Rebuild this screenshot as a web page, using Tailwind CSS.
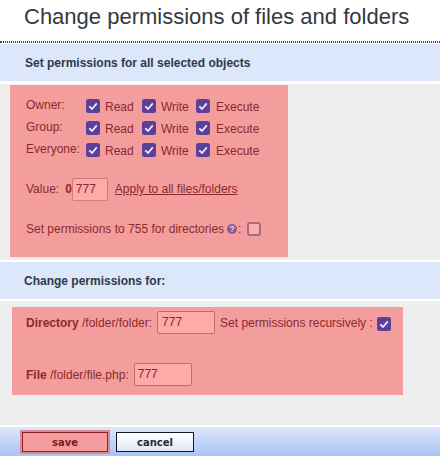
<!DOCTYPE html>
<html><head><meta charset="utf-8">
<script src="https://cdn.jsdelivr.net/npm/@tailwindcss/browser@4"></script>
</head>
<body class="bg-white">
<div class="w-[440px] h-[456px] overflow-hidden flex flex-col font-['Liberation_Sans',Arial,sans-serif] text-[12px] text-[#8a2a2e]">
  <h1 class="h-[41px] pl-6 pt-[3px] text-[22px] leading-[28px] text-[#33393f] font-normal whitespace-nowrap">Change permissions of files and folders</h1>
  <div class="border-y border-dotted border-[#444] h-[2px]"></div>
  <div class="h-[37px] mt-px bg-[#dce7fb] pl-[25px] flex items-center font-bold text-[#2f3a46]">Set permissions for all selected objects</div>
  <div class="h-[3px]"></div>
  <div class="h-[176px] bg-[#eeeeee] pl-[10px] pt-px">
    <div class="w-[278px] h-[172px] bg-[#f49d9d] pl-[16px] pt-[12px] flex flex-col">
      <div class="grid grid-cols-[60px_56px_54px_auto] auto-rows-[18px] gap-y-[4px] leading-[18px]">
        <span class="-mt-px">Owner:</span>
        <label class="flex items-center gap-[5px]"><svg class="w-[14px] h-[14px]" viewBox="0 0 14 14"><rect width="14" height="14" rx="2.5" fill="#5b3f9b"/><path d="M3.3 7.3 6 10l4.8-5.6" fill="none" stroke="#efeaf7" stroke-width="1.8"/></svg><span class="mt-[2px]">Read</span></label>
        <label class="flex items-center gap-[5px]"><svg class="w-[14px] h-[14px]" viewBox="0 0 14 14"><rect width="14" height="14" rx="2.5" fill="#5b3f9b"/><path d="M3.3 7.3 6 10l4.8-5.6" fill="none" stroke="#efeaf7" stroke-width="1.8"/></svg><span class="mt-[2px]">Write</span></label>
        <label class="flex items-center gap-[6px]"><svg class="w-[14px] h-[14px]" viewBox="0 0 14 14"><rect width="14" height="14" rx="2.5" fill="#5b3f9b"/><path d="M3.3 7.3 6 10l4.8-5.6" fill="none" stroke="#efeaf7" stroke-width="1.8"/></svg><span class="mt-[2px]">Execute</span></label>
        <span class="-mt-px">Group:</span>
        <label class="flex items-center gap-[5px]"><svg class="w-[14px] h-[14px]" viewBox="0 0 14 14"><rect width="14" height="14" rx="2.5" fill="#5b3f9b"/><path d="M3.3 7.3 6 10l4.8-5.6" fill="none" stroke="#efeaf7" stroke-width="1.8"/></svg><span class="mt-[2px]">Read</span></label>
        <label class="flex items-center gap-[5px]"><svg class="w-[14px] h-[14px]" viewBox="0 0 14 14"><rect width="14" height="14" rx="2.5" fill="#5b3f9b"/><path d="M3.3 7.3 6 10l4.8-5.6" fill="none" stroke="#efeaf7" stroke-width="1.8"/></svg><span class="mt-[2px]">Write</span></label>
        <label class="flex items-center gap-[6px]"><svg class="w-[14px] h-[14px]" viewBox="0 0 14 14"><rect width="14" height="14" rx="2.5" fill="#5b3f9b"/><path d="M3.3 7.3 6 10l4.8-5.6" fill="none" stroke="#efeaf7" stroke-width="1.8"/></svg><span class="mt-[2px]">Execute</span></label>
        <span class="-mt-px">Everyone:</span>
        <label class="flex items-center gap-[5px]"><svg class="w-[14px] h-[14px]" viewBox="0 0 14 14"><rect width="14" height="14" rx="2.5" fill="#5b3f9b"/><path d="M3.3 7.3 6 10l4.8-5.6" fill="none" stroke="#efeaf7" stroke-width="1.8"/></svg><span class="mt-[2px]">Read</span></label>
        <label class="flex items-center gap-[5px]"><svg class="w-[14px] h-[14px]" viewBox="0 0 14 14"><rect width="14" height="14" rx="2.5" fill="#5b3f9b"/><path d="M3.3 7.3 6 10l4.8-5.6" fill="none" stroke="#efeaf7" stroke-width="1.8"/></svg><span class="mt-[2px]">Write</span></label>
        <label class="flex items-center gap-[6px]"><svg class="w-[14px] h-[14px]" viewBox="0 0 14 14"><rect width="14" height="14" rx="2.5" fill="#5b3f9b"/><path d="M3.3 7.3 6 10l4.8-5.6" fill="none" stroke="#efeaf7" stroke-width="1.8"/></svg><span class="mt-[2px]">Execute</span></label>
      </div>
      <div class="flex items-center mt-[19px] h-[22px]">
        <span>Value:<span class="ml-[6px] font-bold">0</span></span>
        <div class="w-[36px] h-[23px] border border-[#c97f80] rounded-[2px] bg-[#ffa9a9] pl-[3px] leading-[21px] text-[#8a2a2e]">777</div>
        <a class="ml-[7px] underline">Apply to all files/folders</a>
      </div>
      <div class="flex items-center mt-[21px] h-[16px]">
        <span>Set permissions to 755 for directories</span>
        <svg class="w-[10px] h-[10px] ml-[3px]" viewBox="0 0 10 10"><circle cx="5" cy="5" r="5" fill="#8a5a9c"/><path d="M3.5 4c0-2 3.2-2 3.2-.2 0 1.1-1.7 1.1-1.7 2.2M5 7v1" fill="none" stroke="#f3d5dc" stroke-width="1.2"/></svg>
        <span class="ml-px">:</span>
        <span class="ml-[6px] w-[14px] h-[14px] border-2 border-[#a86a80] rounded-[3px] bg-[#f8b0b0]"></span>
      </div>
    </div>
  </div>
  <div class="h-[2px]"></div>
  <div class="h-[37px] bg-[#dce7fb] pl-[24px] flex items-center font-bold text-[#2f3a46]">Change permissions for:</div>
  <div class="h-[2px]"></div>
  <div class="h-[124px] bg-[#eeeeee] pl-[12px] pt-[6px]">
    <div class="w-[391px] h-[88px] bg-[#f49d9d] pl-[14px] pt-[4px] flex flex-col">
      <div class="flex items-center h-[23px]">
        <span><b>Directory</b> /folder/folder:</span>
        <div class="ml-[5px] w-[58px] h-[23px] border border-[#b87072] rounded-[2px] bg-[#ffa9a9] pl-[4px] leading-[21px]">777</div>
        <span class="ml-[5px]">Set permissions recursively :</span>
        <svg class="w-[14px] h-[14px] ml-[4px] mt-[2px]" viewBox="0 0 14 14"><rect width="14" height="14" rx="2.5" fill="#5b3f9b"/><path d="M3.3 7.3 6 10l4.8-5.6" fill="none" stroke="#efeaf7" stroke-width="1.8"/></svg>
      </div>
      <div class="flex items-center h-[23px] mt-[29px]">
        <span><b>File</b> /folder/file.php:</span>
        <div class="ml-[5px] w-[58px] h-[23px] border border-[#b87072] rounded-[2px] bg-[#ffa9a9] pl-[3px] leading-[21px]">777</div>
      </div>
    </div>
  </div>
  <div class="h-[2px]"></div>
  <div class="flex-1 bg-gradient-to-b from-[#dde7fb] to-[#a9c4f4] pl-[22px] flex items-start gap-[8px] pt-[5px]">
    <div class="w-[86px] h-[20px] border-[1.5px] border-[#8c2030] outline-2 outline-[#d98a98] bg-[#f49d9d] flex items-center justify-center font-['DejaVu_Sans',sans-serif] font-bold text-[10px] text-[#7a1a22]">save</div>
    <div class="w-[78px] h-[20px] border-[1.5px] border-[#10182a] bg-gradient-to-b from-white to-[#dfe6f5] flex items-center justify-center font-['DejaVu_Sans',sans-serif] font-bold text-[10px] text-[#222b3a]">cancel</div>
  </div>
</div>
</body></html>
